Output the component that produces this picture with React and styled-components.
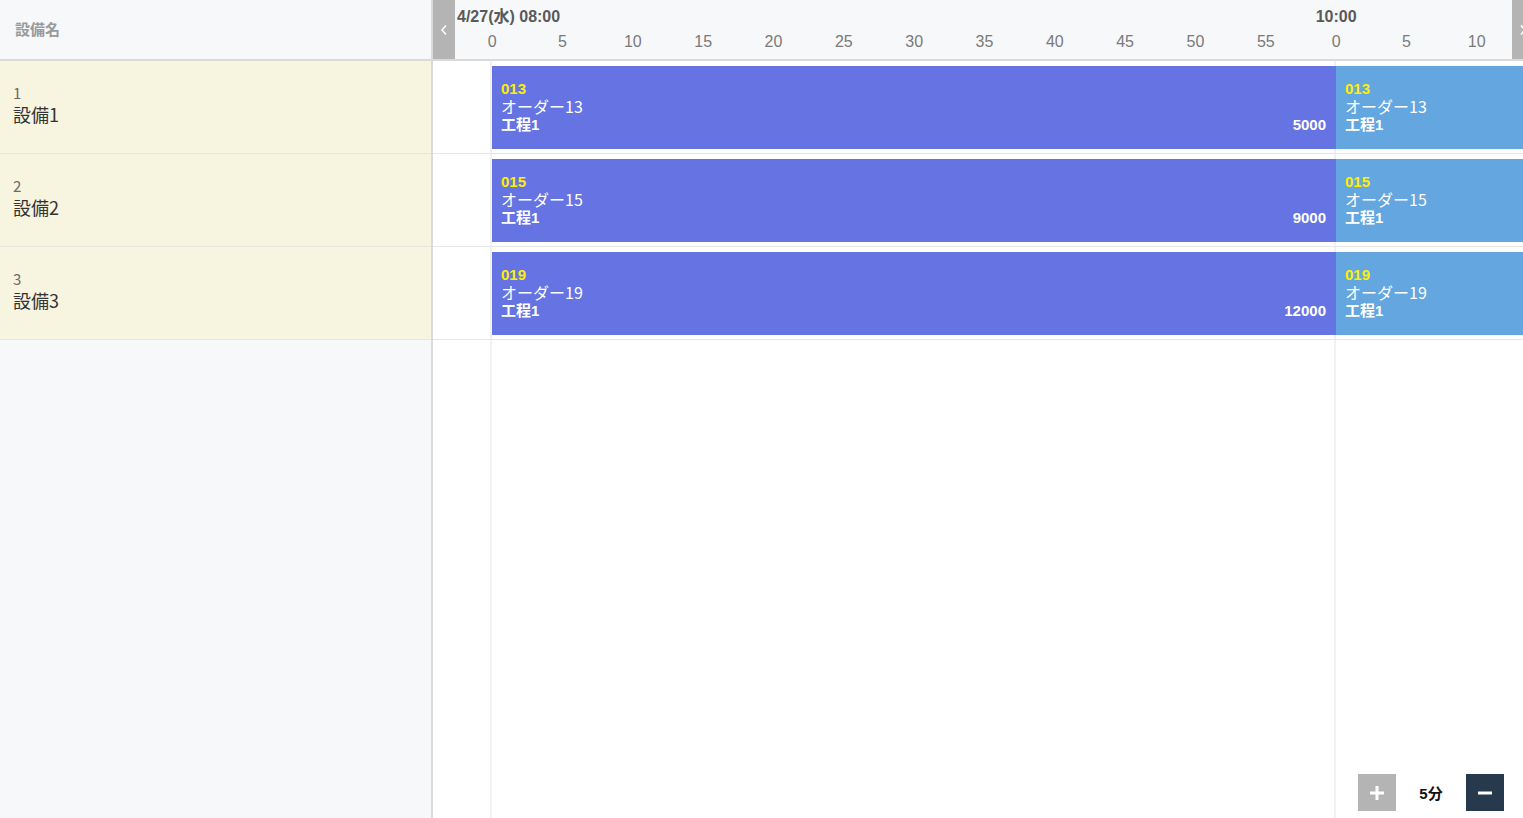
import React from 'react';
import styled, { createGlobalStyle } from 'styled-components';

const MIN_W = 844 / 60;
const ORIGIN = 59;

const equipments = [
  { no: 1, name: '設備1', bars: [
    { code: '013', order: 'オーダー13', step: '工程1', qty: 5000, min: 60, tone: 'main' },
    { code: '013', order: 'オーダー13', step: '工程1', qty: null, min: 60, tone: 'next' },
  ] },
  { no: 2, name: '設備2', bars: [
    { code: '015', order: 'オーダー15', step: '工程1', qty: 9000, min: 60, tone: 'main' },
    { code: '015', order: 'オーダー15', step: '工程1', qty: null, min: 60, tone: 'next' },
  ] },
  { no: 3, name: '設備3', bars: [
    { code: '019', order: 'オーダー19', step: '工程1', qty: 12000, min: 60, tone: 'main' },
    { code: '019', order: 'オーダー19', step: '工程1', qty: null, min: 60, tone: 'next' },
  ] },
];

const ticks = [0, 5, 10, 15, 20, 25, 30, 35, 40, 45, 50, 55, 0, 5, 10];

const GlobalStyle = createGlobalStyle`
  html, body {
    margin: 0;
    padding: 0;
    overflow: hidden;
    background: #fff;
  }
  body {
    font-family: "Liberation Sans", "Noto Sans CJK JP", sans-serif;
  }
`;

const Page = styled.div`
  display: flex;
  width: 1534px;
  height: 818px;
  overflow: hidden;
`;

const LeftPane = styled.div`
  width: 431px;
  flex-shrink: 0;
  border-right: 2px solid #dadada;
  background: #f6f8fa;
  display: flex;
  flex-direction: column;
`;

const LeftHeader = styled.div`
  height: 61px;
  box-sizing: border-box;
  border-bottom: 2px solid #dadada;
  display: flex;
  align-items: center;
  padding: 0 0 2px 15px;
  font-family: "Noto Sans CJK JP", sans-serif;
  font-weight: 700;
  font-size: 15px;
  color: #9a9a9a;
`;

const EquipRow = styled.div`
  height: 93px;
  box-sizing: border-box;
  border-bottom: 1px solid #e6e6e6;
  background: #f7f4df;
  padding: 22px 0 0 13px;
  font-family: "Noto Sans CJK JP", sans-serif;
`;

const EquipNo = styled.div`
  font-size: 15px;
  line-height: 20px;
  color: #6b6b6b;
`;

const EquipName = styled.div`
  font-size: 18px;
  line-height: 23px;
  color: #333;
`;

const RightPane = styled.div`
  flex: 1;
  display: flex;
  flex-direction: column;
  position: relative;
  min-width: 0;
`;

const Header = styled.div`
  height: 59px;
  flex-shrink: 0;
  border-bottom: 2px solid #dadada;
  background: #f6f8fa;
  display: flex;
`;

const ArrowBtn = styled.div`
  width: 22px;
  flex-shrink: 0;
  background: #b4b4b4;
  display: flex;
  align-items: center;
  justify-content: center;
`;

const Scale = styled.div`
  flex: 1;
  overflow: hidden;
  padding-left: 2px;
  display: flex;
  flex-direction: column;
`;

const HourRow = styled.div`
  display: flex;
  height: 31px;
  padding-top: 7px;
  box-sizing: border-box;
  font-weight: 700;
  font-size: 16px;
  line-height: 20px;
  color: #5a5a5a;
  white-space: nowrap;
`;

const HourCell = styled.div`
  width: ${p => p.$w}px;
  flex-shrink: 0;
  display: flex;
`;

const CenteredHour = styled.span`
  transform: translateX(-50%);
`;

const TickRow = styled.div`
  display: flex;
  height: 22px;
  align-items: center;
`;

const Tick = styled.div`
  width: ${MIN_W * 5}px;
  flex-shrink: 0;
  text-align: center;
  font-size: 16px;
  color: #7a7a7a;
`;

const Body = styled.div`
  flex: 1;
  overflow: hidden;
  background-color: #fff;
  background-image: linear-gradient(to right, #f1f1f1 2px, transparent 2px);
  background-size: 844px 100%;
  background-position: ${ORIGIN - 2}px 0;
  background-repeat: repeat-x;
`;

const Lane = styled.div`
  height: 93px;
  box-sizing: border-box;
  border-bottom: 1px solid #e6e6e6;
  padding: 5px 0 4px ${ORIGIN}px;
  display: flex;
`;

const Bar = styled.div`
  width: ${p => p.$w}px;
  flex-shrink: 0;
  background: ${p => (p.$tone === 'main' ? '#6673e3' : '#64a6e0')};
  padding: 14px 10px 0 9px;
  box-sizing: border-box;
  display: flex;
  flex-direction: column;
  color: #fff;
`;

const Code = styled.div`
  font-weight: 700;
  font-size: 15px;
  line-height: 17px;
  color: #ffee00;
`;

const Order = styled.div`
  font-family: "Noto Sans CJK JP", sans-serif;
  font-size: 16px;
  line-height: 18px;
`;

const StepLine = styled.div`
  display: flex;
  justify-content: space-between;
  font-weight: 700;
  font-size: 15px;
  line-height: 19px;
`;

const Zoom = styled.div`
  position: absolute;
  right: 30px;
  bottom: 7px;
  display: flex;
  align-items: center;
`;

const ZoomBtn = styled.div`
  width: 38px;
  height: 37px;
  display: flex;
  align-items: center;
  justify-content: center;
  background: ${p => (p.$dark ? '#27394d' : '#b4b4b4')};
`;

const ZoomLabel = styled.div`
  width: 70px;
  text-align: center;
  font-weight: 700;
  font-size: 15px;
  color: #111;
`;

const Chevron = ({ dir }) => (
  <svg width="8" height="12" viewBox="0 0 8 12">
    <path d={dir === 'left' ? 'M6 1.5 L2 6 L6 10.5' : 'M2 1.5 L6 6 L2 10.5'} fill="none" stroke="#fff" strokeWidth="1.5" />
  </svg>
);

const App = () => {
  return (
    <Page>
      <GlobalStyle />
      <LeftPane>
        <LeftHeader>設備名</LeftHeader>
        {equipments.map(e => (
          <EquipRow key={e.no}>
            <EquipNo>{e.no}</EquipNo>
            <EquipName>{e.name}</EquipName>
          </EquipRow>
        ))}
      </LeftPane>
      <RightPane>
        <Header>
          <ArrowBtn><Chevron dir="left" /></ArrowBtn>
          <Scale>
            <HourRow>
              <HourCell $w={MIN_W * 5 / 2 + 844}>4/27(水) 08:00</HourCell>
              <HourCell $w={300}><CenteredHour>10:00</CenteredHour></HourCell>
            </HourRow>
            <TickRow>
              {ticks.map((t, i) => <Tick key={i}>{t}</Tick>)}
            </TickRow>
          </Scale>
          <ArrowBtn><Chevron dir="right" /></ArrowBtn>
        </Header>
        <Body>
          {equipments.map(e => (
            <Lane key={e.no}>
              {e.bars.map((b, i) => (
                <Bar key={i} $w={b.min * MIN_W} $tone={b.tone}>
                  <Code>{b.code}</Code>
                  <Order>{b.order}</Order>
                  <StepLine>
                    <span>{b.step}</span>
                    {b.qty && <span>{b.qty}</span>}
                  </StepLine>
                </Bar>
              ))}
            </Lane>
          ))}
        </Body>
        <Zoom>
          <ZoomBtn>
            <svg width="18" height="18" viewBox="0 0 18 18"><path d="M9 2v14M2 9h14" stroke="#fff" strokeWidth="3" /></svg>
          </ZoomBtn>
          <ZoomLabel>5分</ZoomLabel>
          <ZoomBtn $dark>
            <svg width="18" height="18" viewBox="0 0 18 18"><path d="M2 9h14" stroke="#fff" strokeWidth="3" /></svg>
          </ZoomBtn>
        </Zoom>
      </RightPane>
    </Page>
  );
};

export default App;
